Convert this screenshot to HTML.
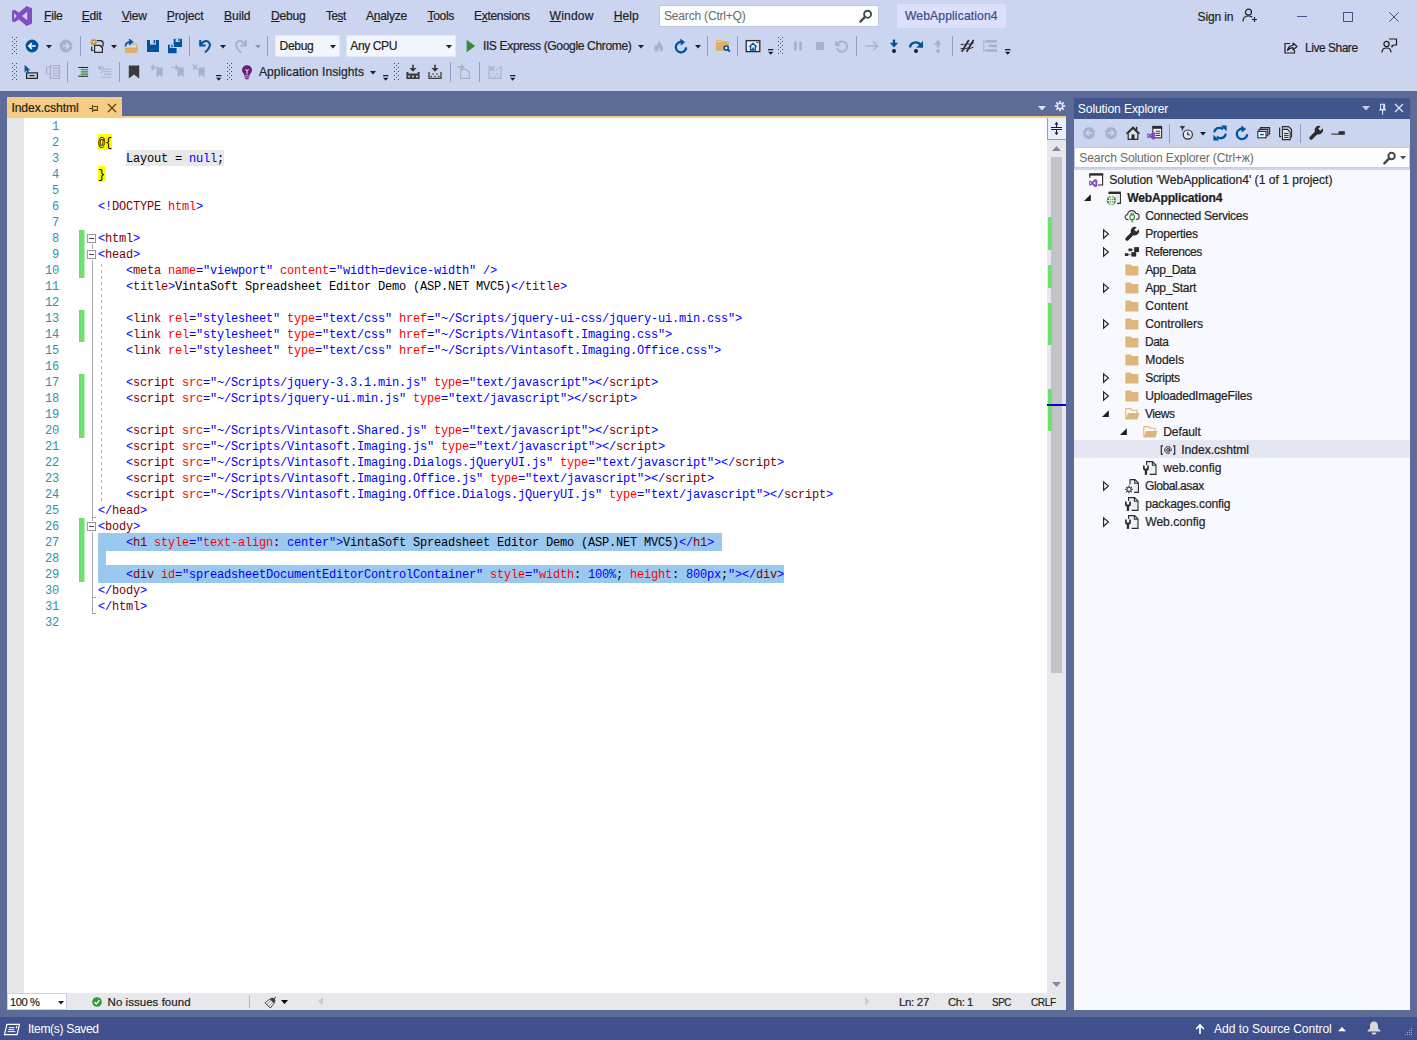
<!DOCTYPE html>
<html>
<head>
<meta charset="utf-8">
<title>WebApplication4 - Microsoft Visual Studio</title>
<style>
*{box-sizing:border-box;margin:0;padding:0}
html,body{width:1417px;height:1040px;overflow:hidden;background:#5d6b99;font-family:"Liberation Sans",sans-serif;font-size:12px;color:#1e1e1e}
#root{position:absolute;left:0;top:0;width:1417px;height:1040px;overflow:hidden}
.t{position:absolute;white-space:nowrap;line-height:16px;height:16px;-webkit-text-stroke:0.2px currentColor}
.t u{text-decoration:underline;text-underline-offset:0.5px;text-decoration-thickness:1px}
svg{position:absolute;overflow:visible}
.ln{position:absolute;left:24px;width:35px;text-align:right;height:16px;line-height:16px;color:#2b91af;font-family:"Liberation Mono",monospace;font-size:12px;letter-spacing:-0.2px}
.cl{position:absolute;left:98px;height:16px;line-height:16px;white-space:pre;font-family:"Liberation Mono",monospace;font-size:12px;letter-spacing:-0.2012px;color:#000}
.b{color:#0000ff}.m{color:#800000}.r{color:#ff0000}
</style>
</head>
<body>
<div id="root">
<!-- backgrounds -->
<div style="position:absolute;left:0px;top:0px;width:1417px;height:91px;background:#ccd5f0;"></div>
<div style="position:absolute;left:659px;top:5px;width:220px;height:22px;background:#fdfdfe;border:1px solid #bcc4de;"></div>
<div style="position:absolute;left:897px;top:4px;width:109px;height:24px;background:#dce0fa;"></div>
<div style="position:absolute;left:80px;top:36px;width:1px;height:20px;background:#8e9bc2;"></div>
<div style="position:absolute;left:189px;top:36px;width:1px;height:20px;background:#8e9bc2;"></div>
<div style="position:absolute;left:267px;top:36px;width:1px;height:20px;background:#8e9bc2;"></div>
<div style="position:absolute;left:275px;top:35px;width:65px;height:22px;background:#f3f5fc;border:1px solid #e2e7f7;"></div>
<div style="position:absolute;left:346px;top:35px;width:110px;height:22px;background:#f3f5fc;border:1px solid #e2e7f7;"></div>
<div style="position:absolute;left:707px;top:36px;width:1px;height:20px;background:#8e9bc2;"></div>
<div style="position:absolute;left:737px;top:36px;width:1px;height:20px;background:#8e9bc2;"></div>
<div style="position:absolute;left:856px;top:36px;width:1px;height:20px;background:#8e9bc2;"></div>
<div style="position:absolute;left:952px;top:36px;width:1px;height:20px;background:#8e9bc2;"></div>
<div style="position:absolute;left:67px;top:62px;width:1px;height:20px;background:#8e9bc2;"></div>
<div style="position:absolute;left:119px;top:62px;width:1px;height:20px;background:#8e9bc2;"></div>
<div style="position:absolute;left:450px;top:62px;width:1px;height:20px;background:#8e9bc2;"></div>
<div style="position:absolute;left:479px;top:62px;width:1px;height:20px;background:#8e9bc2;"></div>
<div style="position:absolute;left:7px;top:97px;width:115px;height:19px;background:#f5cc84;"></div>
<div style="position:absolute;left:7px;top:116px;width:1059px;height:2px;background:#f5cc84;"></div>
<div style="position:absolute;left:7px;top:118px;width:1040px;height:875px;background:#ffffff;"></div>
<div style="position:absolute;left:7px;top:118px;width:17px;height:875px;background:#e6e7e8;"></div>
<div style="position:absolute;left:1047px;top:118px;width:19px;height:875px;background:#e8e8ec;"></div>
<div style="position:absolute;left:7px;top:993px;width:1059px;height:17px;background:#e8e8ec;"></div>
<div style="position:absolute;left:1047px;top:118px;width:19px;height:22px;background:#e9eeff;border-left:1px solid #8e9bc8;border-bottom:1px solid #8e9bc8;"></div>
<div style="position:absolute;left:1051px;top:157px;width:11px;height:516px;background:#c2c3c9;"></div>
<div style="position:absolute;left:1048px;top:217px;width:4px;height:33px;background:#6ce26c;"></div>
<div style="position:absolute;left:1048px;top:265px;width:4px;height:23px;background:#6ce26c;"></div>
<div style="position:absolute;left:1048px;top:303px;width:4px;height:42px;background:#6ce26c;"></div>
<div style="position:absolute;left:1048px;top:389px;width:4px;height:42px;background:#6ce26c;"></div>
<div style="position:absolute;left:1047px;top:404px;width:19px;height:2px;background:#0000cd;"></div>
<div style="position:absolute;left:79px;top:230px;width:5px;height:48px;background:#6ce26c;"></div>
<div style="position:absolute;left:84px;top:230px;width:1px;height:48px;background:#b6f0b6;"></div>
<div style="position:absolute;left:79px;top:310px;width:5px;height:32px;background:#6ce26c;"></div>
<div style="position:absolute;left:84px;top:310px;width:1px;height:32px;background:#b6f0b6;"></div>
<div style="position:absolute;left:79px;top:374px;width:5px;height:64px;background:#6ce26c;"></div>
<div style="position:absolute;left:84px;top:374px;width:1px;height:64px;background:#b6f0b6;"></div>
<div style="position:absolute;left:79px;top:518px;width:5px;height:64px;background:#6ce26c;"></div>
<div style="position:absolute;left:84px;top:518px;width:1px;height:64px;background:#b6f0b6;"></div>
<div style="position:absolute;left:87px;top:234px;width:9px;height:9px;background:#ffffff;border:1px solid #999;"></div>
<div style="position:absolute;left:89px;top:238px;width:5px;height:1px;background:#444;"></div>
<div style="position:absolute;left:87px;top:250px;width:9px;height:9px;background:#ffffff;border:1px solid #999;"></div>
<div style="position:absolute;left:89px;top:254px;width:5px;height:1px;background:#444;"></div>
<div style="position:absolute;left:87px;top:522px;width:9px;height:9px;background:#ffffff;border:1px solid #999;"></div>
<div style="position:absolute;left:89px;top:526px;width:5px;height:1px;background:#444;"></div>
<div style="position:absolute;left:92px;top:244px;width:1px;height:5px;background:#a5a5a5;"></div>
<div style="position:absolute;left:92px;top:260px;width:1px;height:261px;background:#a5a5a5;"></div>
<div style="position:absolute;left:92px;top:532px;width:1px;height:82px;background:#a5a5a5;"></div>
<div style="position:absolute;left:92px;top:517px;width:4px;height:1px;background:#a5a5a5;"></div>
<div style="position:absolute;left:92px;top:597px;width:4px;height:1px;background:#a5a5a5;"></div>
<div style="position:absolute;left:92px;top:613px;width:4px;height:1px;background:#a5a5a5;"></div>
<div style="position:absolute;left:98px;top:134px;width:14px;height:16px;background:#ffff00;"></div>
<div style="position:absolute;left:98px;top:166px;width:7px;height:16px;background:#ffff00;"></div>
<div style="position:absolute;left:126px;top:150px;width:98px;height:16px;background:#e8e8e8;"></div>
<div style="position:absolute;left:98px;top:533px;width:624px;height:18px;background:#9bc8ee;"></div>
<div style="position:absolute;left:98px;top:550px;width:8px;height:16px;background:#9bc8ee;"></div>
<div style="position:absolute;left:98px;top:565px;width:686px;height:18px;background:#9bc8ee;"></div>
<div style="position:absolute;left:101px;top:264px;width:1px;height:238px;background:repeating-linear-gradient(to bottom,#b8b8b8 0,#b8b8b8 3px,transparent 3px,transparent 6px)"></div>
<div style="position:absolute;left:101px;top:536px;width:1px;height:46px;background:repeating-linear-gradient(to bottom,#b8b8b8 0,#b8b8b8 3px,transparent 3px,transparent 6px)"></div>
<div style="position:absolute;left:7px;top:993px;width:60px;height:17px;background:#c9d0ea;"></div>
<div style="position:absolute;left:8px;top:994px;width:58px;height:15px;background:#ffffff;"></div>
<div style="position:absolute;left:249px;top:995px;width:1px;height:13px;background:#b0b8d6;"></div>
<div style="position:absolute;left:1074px;top:98px;width:336px;height:912px;background:#f7f9fe;"></div>
<div style="position:absolute;left:1074px;top:98px;width:336px;height:21px;background:#40568d;"></div>
<div style="position:absolute;left:1074px;top:119px;width:336px;height:51px;background:#ccd5f0;"></div>
<div style="position:absolute;left:1074px;top:147px;width:336px;height:21px;background:#fdfdfe;border:1px solid #bfc6de;border-bottom-color:#c6cbde;"></div>
<div style="position:absolute;left:1169px;top:124px;width:1px;height:19px;background:#8e9bc2;"></div>
<div style="position:absolute;left:1300px;top:124px;width:1px;height:19px;background:#8e9bc2;"></div>
<div style="position:absolute;left:1074px;top:440px;width:336px;height:18px;background:#e4e6f1;"></div>
<div style="position:absolute;left:0px;top:1017px;width:1417px;height:23px;background:#40508d;"></div>
<!-- code -->
<div class="ln" style="top:119px">1</div>
<div class="ln" style="top:135px">2</div>
<div class="cl" style="top:135px"><span class="y">@{</span></div>
<div class="ln" style="top:151px">3</div>
<div class="cl" style="top:151px">    <span class="g">Layout = <span class="b">null</span>;</span></div>
<div class="ln" style="top:167px">4</div>
<div class="cl" style="top:167px"><span class="y">}</span></div>
<div class="ln" style="top:183px">5</div>
<div class="ln" style="top:199px">6</div>
<div class="cl" style="top:199px"><span class="b">&lt;!</span><span class="m">DOCTYPE</span> <span class="r">html</span><span class="b">&gt;</span></div>
<div class="ln" style="top:215px">7</div>
<div class="ln" style="top:231px">8</div>
<div class="cl" style="top:231px"><span class="b">&lt;</span><span class="m">html</span><span class="b">&gt;</span></div>
<div class="ln" style="top:247px">9</div>
<div class="cl" style="top:247px"><span class="b">&lt;</span><span class="m">head</span><span class="b">&gt;</span></div>
<div class="ln" style="top:263px">10</div>
<div class="cl" style="top:263px">    <span class="b">&lt;</span><span class="m">meta</span> <span class="r">name</span><span class="b">=</span><span class="b">&quot;viewport&quot;</span> <span class="r">content</span><span class="b">=</span><span class="b">&quot;width=device-width&quot;</span> <span class="b">/</span><span class="b">&gt;</span></div>
<div class="ln" style="top:279px">11</div>
<div class="cl" style="top:279px">    <span class="b">&lt;</span><span class="m">title</span><span class="b">&gt;</span>VintaSoft Spreadsheet Editor Demo (ASP.NET MVC5)<span class="b">&lt;/</span><span class="m">title</span><span class="b">&gt;</span></div>
<div class="ln" style="top:295px">12</div>
<div class="ln" style="top:311px">13</div>
<div class="cl" style="top:311px">    <span class="b">&lt;</span><span class="m">link</span> <span class="r">rel</span><span class="b">=</span><span class="b">&quot;stylesheet&quot;</span> <span class="r">type</span><span class="b">=</span><span class="b">&quot;text/css&quot;</span> <span class="r">href</span><span class="b">=</span><span class="b">&quot;~/Scripts/jquery-ui-css/jquery-ui.min.css&quot;</span><span class="b">&gt;</span></div>
<div class="ln" style="top:327px">14</div>
<div class="cl" style="top:327px">    <span class="b">&lt;</span><span class="m">link</span> <span class="r">rel</span><span class="b">=</span><span class="b">&quot;stylesheet&quot;</span> <span class="r">type</span><span class="b">=</span><span class="b">&quot;text/css&quot;</span> <span class="r">href</span><span class="b">=</span><span class="b">&quot;~/Scripts/Vintasoft.Imaging.css&quot;</span><span class="b">&gt;</span></div>
<div class="ln" style="top:343px">15</div>
<div class="cl" style="top:343px">    <span class="b">&lt;</span><span class="m">link</span> <span class="r">rel</span><span class="b">=</span><span class="b">&quot;stylesheet&quot;</span> <span class="r">type</span><span class="b">=</span><span class="b">&quot;text/css&quot;</span> <span class="r">href</span><span class="b">=</span><span class="b">&quot;~/Scripts/Vintasoft.Imaging.Office.css&quot;</span><span class="b">&gt;</span></div>
<div class="ln" style="top:359px">16</div>
<div class="ln" style="top:375px">17</div>
<div class="cl" style="top:375px">    <span class="b">&lt;</span><span class="m">script</span> <span class="r">src</span><span class="b">=</span><span class="b">&quot;~/Scripts/jquery-3.3.1.min.js&quot;</span> <span class="r">type</span><span class="b">=</span><span class="b">&quot;text/javascript&quot;</span><span class="b">&gt;</span><span class="b">&lt;/</span><span class="m">script</span><span class="b">&gt;</span></div>
<div class="ln" style="top:391px">18</div>
<div class="cl" style="top:391px">    <span class="b">&lt;</span><span class="m">script</span> <span class="r">src</span><span class="b">=</span><span class="b">&quot;~/Scripts/jquery-ui.min.js&quot;</span> <span class="r">type</span><span class="b">=</span><span class="b">&quot;text/javascript&quot;</span><span class="b">&gt;</span><span class="b">&lt;/</span><span class="m">script</span><span class="b">&gt;</span></div>
<div class="ln" style="top:407px">19</div>
<div class="ln" style="top:423px">20</div>
<div class="cl" style="top:423px">    <span class="b">&lt;</span><span class="m">script</span> <span class="r">src</span><span class="b">=</span><span class="b">&quot;~/Scripts/Vintasoft.Shared.js&quot;</span> <span class="r">type</span><span class="b">=</span><span class="b">&quot;text/javascript&quot;</span><span class="b">&gt;</span><span class="b">&lt;/</span><span class="m">script</span><span class="b">&gt;</span></div>
<div class="ln" style="top:439px">21</div>
<div class="cl" style="top:439px">    <span class="b">&lt;</span><span class="m">script</span> <span class="r">src</span><span class="b">=</span><span class="b">&quot;~/Scripts/Vintasoft.Imaging.js&quot;</span> <span class="r">type</span><span class="b">=</span><span class="b">&quot;text/javascript&quot;</span><span class="b">&gt;</span><span class="b">&lt;/</span><span class="m">script</span><span class="b">&gt;</span></div>
<div class="ln" style="top:455px">22</div>
<div class="cl" style="top:455px">    <span class="b">&lt;</span><span class="m">script</span> <span class="r">src</span><span class="b">=</span><span class="b">&quot;~/Scripts/Vintasoft.Imaging.Dialogs.jQueryUI.js&quot;</span> <span class="r">type</span><span class="b">=</span><span class="b">&quot;text/javascript&quot;</span><span class="b">&gt;</span><span class="b">&lt;/</span><span class="m">script</span><span class="b">&gt;</span></div>
<div class="ln" style="top:471px">23</div>
<div class="cl" style="top:471px">    <span class="b">&lt;</span><span class="m">script</span> <span class="r">src</span><span class="b">=</span><span class="b">&quot;~/Scripts/Vintasoft.Imaging.Office.js&quot;</span> <span class="r">type</span><span class="b">=</span><span class="b">&quot;text/javascript&quot;</span><span class="b">&gt;</span><span class="b">&lt;/</span><span class="m">script</span><span class="b">&gt;</span></div>
<div class="ln" style="top:487px">24</div>
<div class="cl" style="top:487px">    <span class="b">&lt;</span><span class="m">script</span> <span class="r">src</span><span class="b">=</span><span class="b">&quot;~/Scripts/Vintasoft.Imaging.Office.Dialogs.jQueryUI.js&quot;</span> <span class="r">type</span><span class="b">=</span><span class="b">&quot;text/javascript&quot;</span><span class="b">&gt;</span><span class="b">&lt;/</span><span class="m">script</span><span class="b">&gt;</span></div>
<div class="ln" style="top:503px">25</div>
<div class="cl" style="top:503px"><span class="b">&lt;/</span><span class="m">head</span><span class="b">&gt;</span></div>
<div class="ln" style="top:519px">26</div>
<div class="cl" style="top:519px"><span class="b">&lt;</span><span class="m">body</span><span class="b">&gt;</span></div>
<div class="ln" style="top:535px">27</div>
<div class="cl" style="top:535px">    <span class="b">&lt;</span><span class="m">h1</span> <span class="r">style</span><span class="b">=</span><span class="b">"</span><span class="r">text-align</span>:<span class="b"> center</span><span class="b">"</span><span class="b">&gt;</span>VintaSoft Spreadsheet Editor Demo (ASP.NET MVC5)<span class="b">&lt;/</span><span class="m">h1</span><span class="b">&gt;</span></div>
<div class="ln" style="top:551px">28</div>
<div class="ln" style="top:567px">29</div>
<div class="cl" style="top:567px">    <span class="b">&lt;</span><span class="m">div</span> <span class="r">id</span><span class="b">=</span><span class="b">&quot;spreadsheetDocumentEditorControlContainer&quot;</span> <span class="r">style</span><span class="b">=</span><span class="b">"</span><span class="r">width</span>:<span class="b"> 100%</span>; <span class="r">height</span>:<span class="b"> 800px</span>;<span class="b">"</span><span class="b">&gt;</span><span class="b">&lt;/</span><span class="m">div</span><span class="b">&gt;</span></div>
<div class="ln" style="top:583px">30</div>
<div class="cl" style="top:583px"><span class="b">&lt;/</span><span class="m">body</span><span class="b">&gt;</span></div>
<div class="ln" style="top:599px">31</div>
<div class="cl" style="top:599px"><span class="b">&lt;/</span><span class="m">html</span><span class="b">&gt;</span></div>
<div class="ln" style="top:615px">32</div>
<!-- icons -->
<svg style="left:12px;top:6px" width="20" height="20" viewBox="0 0 20 20"><path fill="#854cc7" fill-rule="evenodd" d="M14.6 0 L20 2.3 V17.4 L14.6 20 L6.9 13.4 L2.2 16.2 L0 15 V5 L2.2 3.8 L6.9 6.6 Z M10 10 L15.2 14.3 V5.7 Z M2.2 7.1 V12.9 L4.7 10 Z"/></svg>
<svg style="left:857.5px;top:8.5px" width="14" height="14" viewBox="0 0 14 14"><circle cx="9.6" cy="5.2" r="3.5" fill="none" stroke="#4a4a4a" stroke-width="1.9"/><path d="M7 7.8 L2.4 12.6" stroke="#4a4a4a" stroke-width="2.4" stroke-linecap="round"/></svg>
<svg style="left:1242px;top:7.5px" width="16" height="16" viewBox="0 0 16 16"><circle cx="6.5" cy="4.2" r="3" fill="none" stroke="#1e1e1e" stroke-width="1.2"/><path d="M1 13.5 C1 9.5 3.5 8 6.5 8 C8 8 9.3 8.4 10.2 9.2" fill="none" stroke="#1e1e1e" stroke-width="1.2"/><path d="M12.5 9 V14 M10 11.5 H15" stroke="#1e1e1e" stroke-width="1.2"/></svg>
<svg style="left:1297px;top:11px" width="10" height="11" viewBox="0 0 10 11"><path d="M0 5.5 H10" stroke="#44518a" stroke-width="1"/></svg>
<svg style="left:1343px;top:12px" width="10" height="10" viewBox="0 0 10 10"><rect x="0.5" y="0.5" width="9" height="9" fill="none" stroke="#44518a" stroke-width="1"/></svg>
<svg style="left:1389.2px;top:12px" width="10" height="10" viewBox="0 0 10 10"><path d="M0.3 0.3 L9.7 9.7 M9.7 0.3 L0.3 9.7" stroke="#44518a" stroke-width="1"/></svg>
<svg style="left:1283px;top:39.5px" width="16" height="16" viewBox="0 0 16 16"><path d="M7 3.5 H2 V13 H11.5 V10" fill="none" stroke="#1e1e1e" stroke-width="1.2"/><path d="M4.5 10.5 C5 7 7.5 5.5 10 5.5 V3 L14 6.5 L10 10 V7.6 C8 7.6 6 8.4 4.5 10.5 Z" fill="none" stroke="#1e1e1e" stroke-width="1.1" stroke-linejoin="round"/></svg>
<svg style="left:1381px;top:38px" width="16" height="16" viewBox="0 0 16 16"><circle cx="5.5" cy="6" r="2.6" fill="none" stroke="#1e1e1e" stroke-width="1.2"/><path d="M1 14.5 C1 11.5 3 10 5.5 10 C8 10 10 11.5 10 14.5" fill="none" stroke="#1e1e1e" stroke-width="1.2"/><path d="M8 1 H15.5 V7 H12.5 L11 9 V7" fill="none" stroke="#1e1e1e" stroke-width="1.2" stroke-linejoin="round"/></svg>
<svg style="left:12px;top:37px" width="5" height="18" viewBox="0 0 5 18" shape-rendering="crispEdges" fill="#3f4d7a"><rect x="0" y="0" width="1" height="1"/><rect x="4" y="0" width="1" height="1"/><rect x="2" y="2" width="1" height="1"/><rect x="0" y="4" width="1" height="1"/><rect x="4" y="4" width="1" height="1"/><rect x="2" y="6" width="1" height="1"/><rect x="0" y="8" width="1" height="1"/><rect x="4" y="8" width="1" height="1"/><rect x="2" y="10" width="1" height="1"/><rect x="0" y="12" width="1" height="1"/><rect x="4" y="12" width="1" height="1"/><rect x="2" y="14" width="1" height="1"/><rect x="0" y="16" width="1" height="1"/><rect x="4" y="16" width="1" height="1"/></svg>
<svg style="left:24px;top:38px" width="16" height="16" viewBox="0 0 16 16"><circle cx="8" cy="8" r="6.4" fill="#00539c"/><path d="M11.6 8 H5.4 M7.8 5.2 L5 8 L7.8 10.8" fill="none" stroke="#fff" stroke-width="1.7"/></svg>
<svg style="left:46px;top:44.8px" width="6" height="3.4" viewBox="0 0 6 3.4"><path d="M0 0 H6 L3 3.4 Z" fill="#1e1e1e"/></svg>
<svg style="left:58px;top:38px" width="16" height="16" viewBox="0 0 16 16"><circle cx="8" cy="8" r="6.4" fill="#a9b0cc"/><path d="M4.4 8 H10.6 M8.2 5.2 L11 8 L8.2 10.8" fill="none" stroke="#ccd5f0" stroke-width="1.7"/></svg>
<svg style="left:88.6px;top:38px" width="16" height="16" viewBox="0 0 16 16"><path d="M7.7 2.7 H12.2 L14.1 4.6 V8.4" fill="none" stroke="#2b2b2b" stroke-width="1.2"/><path d="M11.4 2.4 L14.4 5.4 V2.4 Z" fill="#2b2b2b" opacity="0.55"/><path d="M5.6 7.3 H10.6 L13.4 10.1 V14.3 H5.6 Z" fill="#dfe0f2" stroke="#2b2b2b" stroke-width="1.2"/><path d="M10 7 L13.7 10.7 V7 Z" fill="#2b2b2b" opacity="0.6"/><path d="M2.7 8.6 V12.5 H4.4" fill="none" stroke="#2b2b2b" stroke-width="1.2"/><g stroke="#c47f17" stroke-width="1.15"><path d="M4.7 0.7 V7.7 M1.2 4.2 H8.2 M2.2 1.7 L7.2 6.7 M7.2 1.7 L2.2 6.7"/></g><circle cx="4.7" cy="4.2" r="1.15" fill="#e9dcc6"/></svg>
<svg style="left:111px;top:44.8px" width="6" height="3.4" viewBox="0 0 6 3.4"><path d="M0 0 H6 L3 3.4 Z" fill="#1e1e1e"/></svg>
<svg style="left:122.5px;top:38px" width="16" height="16" viewBox="0 0 16 16"><path d="M9.2 6.3 H13.7 V10" fill="#f1e2c4" stroke="#d9ad62" stroke-width="1.1"/><path d="M1.9 9.7 H15.3 L14.1 15 H1.9 Z" fill="#dcb067"/><path d="M2.5 8.4 C2.3 5.2 4.4 3.9 8.4 3.9" fill="none" stroke="#00539c" stroke-width="1.7"/><path d="M6 1.3 L9.3 3.9 L6 6.5" fill="none" stroke="#00539c" stroke-width="1.7"/></svg>
<svg style="left:145px;top:38px" width="16" height="16" viewBox="0 0 16 16"><path d="M2 2 H14 V14 H2 Z" fill="#00539c"/><rect x="5" y="2" width="6" height="4.6" fill="#ccd5f0"/><rect x="8.6" y="2" width="1.6" height="3.4" fill="#00539c"/></svg>
<svg style="left:167.4px;top:38px" width="16" height="16" viewBox="0 0 16 16"><path d="M6.6 0.8 H15 V9 H6.6 Z" fill="#00539c"/><rect x="8.6" y="0.8" width="4.2" height="3.2" fill="#ccd5f0"/><rect x="11.2" y="0.8" width="1.2" height="2.4" fill="#00539c"/><path d="M6.6 9 V6 H5.6 V10 H10.6 V9 Z" fill="#ccd5f0"/><path d="M1 6.8 H5.6 V10 H9.6 V15.2 H1 Z" fill="#00539c"/><rect x="2.8" y="6.8" width="2.8" height="3" fill="#ccd5f0"/><rect x="4.4" y="6.8" width="1.1" height="2.2" fill="#00539c"/></svg>
<svg style="left:197px;top:38px" width="16" height="16" viewBox="0 0 16 16"><path d="M3.2 2 V7.4 H8.6" fill="none" stroke="#00539c" stroke-width="2"/><path d="M3.6 7 C5 3.6 9 2 11.6 4 C14.4 6.2 12.6 10.4 8 14.6" fill="none" stroke="#00539c" stroke-width="2"/></svg>
<svg style="left:220px;top:44.8px" width="6" height="3.4" viewBox="0 0 6 3.4"><path d="M0 0 H6 L3 3.4 Z" fill="#1e1e1e"/></svg>
<svg style="left:232.5px;top:38px" width="16" height="16" viewBox="0 0 16 16"><path d="M12.8 2 V7.4 H7.4" fill="none" stroke="#a9b0cc" stroke-width="2"/><path d="M12.4 7 C11 3.6 7 2 4.4 4 C1.6 6.2 3.4 10.4 8 14.6" fill="none" stroke="#a9b0cc" stroke-width="2"/></svg>
<svg style="left:254.6px;top:44.8px" width="6" height="3.4" viewBox="0 0 6 3.4"><path d="M0 0 H6 L3 3.4 Z" fill="#8f94a8"/></svg>
<svg style="left:329.5px;top:44.8px" width="6" height="3.4" viewBox="0 0 6 3.4"><path d="M0 0 H6 L3 3.4 Z" fill="#1e1e1e"/></svg>
<svg style="left:446px;top:44.8px" width="6" height="3.4" viewBox="0 0 6 3.4"><path d="M0 0 H6 L3 3.4 Z" fill="#1e1e1e"/></svg>
<svg style="left:463px;top:38px" width="16" height="16" viewBox="0 0 16 16"><path d="M3.6 1.8 L12.2 8 L3.6 14.2 Z" fill="#388a34"/></svg>
<svg style="left:638px;top:44.8px" width="6" height="3.4" viewBox="0 0 6 3.4"><path d="M0 0 H6 L3 3.4 Z" fill="#1e1e1e"/></svg>
<svg style="left:650px;top:38px" width="16" height="16" viewBox="0 0 16 16"><path d="M8.8 2 C9.6 5 13.2 7 13.2 10.4 C13.2 12.6 11.4 14 9.2 14 C6.8 14 5.6 12.4 5.6 10.6 C5.6 8 8.4 6.4 8.8 2 Z" fill="#a9b0cc"/><path d="M5.8 5.2 C6.2 7.8 3.8 9 3.8 11.2 C3.8 12.8 5 13.8 6.6 14 C5 12.6 5.2 10.6 6.4 9 C6.9 8 6.5 6.4 5.8 5.2 Z" fill="#a9b0cc"/><path d="M9.2 14 C8 13 8.2 11.4 9.4 10 C9.8 11.2 10.8 11.6 10.6 13 Z" fill="#ccd5f0"/></svg>
<svg style="left:673px;top:38px" width="16" height="16" viewBox="0 0 16 16"><path d="M13.2 9.4 A5.2 5.2 0 1 1 9.6 4.2" fill="none" stroke="#00539c" stroke-width="2.3"/><path d="M7.2 0.6 L12.2 4.2 L7.8 7.6 Z" fill="#00539c"/></svg>
<svg style="left:694.5px;top:44.8px" width="6" height="3.4" viewBox="0 0 6 3.4"><path d="M0 0 H6 L3 3.4 Z" fill="#1e1e1e"/></svg>
<svg style="left:714px;top:38px" width="16" height="16" viewBox="0 0 16 16"><path d="M1.9 2 H7.4 L8.4 3.2 H15 V12.8 H1.9 Z" fill="#dcb067"/><path d="M2.6 3.3 H7.6" stroke="#f1e2c4" stroke-width="0.9"/><circle cx="12.2" cy="10" r="2.1" fill="#dfe8fb" stroke="#00539c" stroke-width="1.5"/><path d="M13.8 11.6 L16 13.6" stroke="#00539c" stroke-width="1.9"/></svg>
<svg style="left:745px;top:38px" width="16" height="16" viewBox="0 0 16 16"><rect x="1.2" y="2.6" width="13.6" height="11" fill="#e6eaf8" stroke="#2b2b2b" stroke-width="1.3"/><path d="M4.4 8.8 L8 5.4 L11.6 8.8 M5.6 8 V12 H10.4 V8" fill="none" stroke="#00539c" stroke-width="1.3"/><rect x="7.2" y="9.6" width="1.6" height="2.4" fill="#00539c"/><path d="M11.4 4.4 H13.4" stroke="#1e1e1e" stroke-width="1"/></svg>
<svg style="left:768.3px;top:49px" width="5.4" height="6" viewBox="0 0 5.4 6"><path d="M0 0 H5.4 V1.3 H0 Z M0 2.8 H5.4 L2.7 5.8 Z" fill="#1e1e1e"/></svg>
<svg style="left:778px;top:37px" width="5" height="18" viewBox="0 0 5 18" shape-rendering="crispEdges" fill="#3f4d7a"><rect x="0" y="0" width="1" height="1"/><rect x="4" y="0" width="1" height="1"/><rect x="2" y="2" width="1" height="1"/><rect x="0" y="4" width="1" height="1"/><rect x="4" y="4" width="1" height="1"/><rect x="2" y="6" width="1" height="1"/><rect x="0" y="8" width="1" height="1"/><rect x="4" y="8" width="1" height="1"/><rect x="2" y="10" width="1" height="1"/><rect x="0" y="12" width="1" height="1"/><rect x="4" y="12" width="1" height="1"/><rect x="2" y="14" width="1" height="1"/><rect x="0" y="16" width="1" height="1"/><rect x="4" y="16" width="1" height="1"/></svg>
<svg style="left:790px;top:38px" width="16" height="16" viewBox="0 0 16 16"><rect x="4" y="3.6" width="2.8" height="8.8" fill="#a9b0cc"/><rect x="9.2" y="3.6" width="2.8" height="8.8" fill="#a9b0cc"/></svg>
<svg style="left:812px;top:38px" width="16" height="16" viewBox="0 0 16 16"><rect x="4" y="4" width="8" height="8" fill="#a9b0cc"/></svg>
<svg style="left:833.5px;top:38px" width="16" height="16" viewBox="0 0 16 16"><path d="M3.4 6.2 A5.1 5.1 0 1 1 3 9.8" fill="none" stroke="#a9b0cc" stroke-width="2"/><path d="M1.2 2.2 V8 H7 Z" fill="#a9b0cc"/></svg>
<svg style="left:863.5px;top:38px" width="16" height="16" viewBox="0 0 16 16"><path d="M1.6 8 H13.4 M9.4 3.8 L13.6 8 L9.4 12.2" fill="none" stroke="#a9b0cc" stroke-width="1.5"/></svg>
<svg style="left:886px;top:38px" width="16" height="16" viewBox="0 0 16 16"><circle cx="8" cy="13" r="2" fill="#1e1e1e"/><path d="M8 1.6 V6" stroke="#00539c" stroke-width="2.4"/><path d="M3.8 4.8 L8 9.4 L12.2 4.8 Z" fill="#00539c"/></svg>
<svg style="left:908px;top:38px" width="16" height="16" viewBox="0 0 16 16"><circle cx="8" cy="13" r="2" fill="#1e1e1e"/><path d="M2 9.4 C2.6 4.2 9.6 2.6 12.6 7" fill="none" stroke="#00539c" stroke-width="2.4"/><path d="M15 3 V9.8 H8.2 Z" fill="#00539c"/></svg>
<svg style="left:929.5px;top:38px" width="16" height="16" viewBox="0 0 16 16"><circle cx="8" cy="13" r="2" fill="#a9b0cc"/><path d="M8 5 V9.6" stroke="#a9b0cc" stroke-width="2.4"/><path d="M3.8 6.4 L8 1.8 L12.2 6.4 Z" fill="#a9b0cc"/></svg>
<svg style="left:959px;top:38px" width="16" height="16" viewBox="0 0 16 16"><g fill="none" stroke="#2b2b2b"><path d="M2.8 13.8 L9.8 2 M7.6 13.8 L14.6 2" stroke-width="1.7"/><path d="M1.6 6.8 C3.4 5 5 8 7 6.4 C9 4.8 10.6 7.4 12.4 5.8 L14.6 5" stroke-width="1"/><path d="M1.4 11 C3.2 9.2 4.8 12.2 6.8 10.6 C8.8 9 10.4 11.6 12.2 10 L14.4 9.2" stroke-width="1"/></g></svg>
<svg style="left:982px;top:38px" width="16" height="16" viewBox="0 0 16 16"><g fill="#a9b0cc"><rect x="4" y="2" width="11" height="2.6"/><rect x="6.4" y="6.6" width="8.6" height="2.6"/><rect x="4" y="11.2" width="11" height="2.6"/></g><path d="M4.6 3.2 H1.8 V12.6 H4.6" fill="none" stroke="#a9b0cc" stroke-width="1.2"/></svg>
<svg style="left:1005px;top:49px" width="5.4" height="6" viewBox="0 0 5.4 6"><path d="M0 0 H5.4 V1.3 H0 Z M0 2.8 H5.4 L2.7 5.8 Z" fill="#1e1e1e"/></svg>
<svg style="left:12px;top:63px" width="5" height="18" viewBox="0 0 5 18" shape-rendering="crispEdges" fill="#3f4d7a"><rect x="0" y="0" width="1" height="1"/><rect x="4" y="0" width="1" height="1"/><rect x="2" y="2" width="1" height="1"/><rect x="0" y="4" width="1" height="1"/><rect x="4" y="4" width="1" height="1"/><rect x="2" y="6" width="1" height="1"/><rect x="0" y="8" width="1" height="1"/><rect x="4" y="8" width="1" height="1"/><rect x="2" y="10" width="1" height="1"/><rect x="0" y="12" width="1" height="1"/><rect x="4" y="12" width="1" height="1"/><rect x="2" y="14" width="1" height="1"/><rect x="0" y="16" width="1" height="1"/><rect x="4" y="16" width="1" height="1"/></svg>
<svg style="left:23.4px;top:64px" width="16" height="16" viewBox="0 0 16 16"><path d="M3.6 8.8 H14.4 V14.4 H3.6 Z" fill="none" stroke="#2b2b2b" stroke-width="1.3"/><path d="M6.4 11.6 H11.6" stroke="#2b2b2b" stroke-width="1.3"/><path d="M1.6 0.8 V8.6 L3.6 6.8 L5 9.6 L6.4 9 L5 6.2 H7.4 Z" fill="#00539c"/></svg>
<svg style="left:45px;top:64px" width="16" height="16" viewBox="0 0 16 16"><g stroke="#a9b0cc" stroke-width="1.1" fill="none"><path d="M5.4 1.6 H14.6 V14.4 H5.4 Z"/><path d="M7.4 4.4 H14 M7.4 6.8 H14 M7.4 9.2 H14 M7.4 11.6 H14"/><path d="M5.4 3.2 H1.6 V9.8 H5.4"/></g></svg>
<svg style="left:75px;top:64px" width="16" height="16" viewBox="0 0 16 16"><g stroke-width="1.1"><path d="M3.3 3.5 H13.1" stroke="#2b2b2b"/><path d="M5.8 5.7 H13.1 M5.8 7.9 H13.1 M5.8 10.1 H13.1" stroke="#2e8b2e"/><path d="M3.3 12.3 H13.1" stroke="#2b2b2b"/></g></svg>
<svg style="left:97px;top:64px" width="16" height="16" viewBox="0 0 16 16"><g stroke="#a9b0cc" stroke-width="1.1" fill="none"><path d="M7 5.2 H14.4 M7 7.8 H14.4 M7 10.4 H14.4 M4.4 13.2 H14.4"/><path d="M2 1.6 V5 H5 M2.4 4.6 C3.6 2 6.6 2.4 6.4 5 C6.2 6.6 5 7.6 3.6 9"/></g></svg>
<svg style="left:126.4px;top:64px" width="16" height="16" viewBox="0 0 16 16"><path d="M2.8 1.6 H13.2 V14.6 L8 10.6 L2.8 14.6 Z" fill="#3b3b3b"/></svg>
<svg style="left:149.6px;top:64px" width="16" height="16" viewBox="0 0 16 16"><path d="M6.6 3.6 H12.6 V13.2 L9.6 10.8 L6.6 13.2 Z" fill="#a9b0cc"/><path d="M7.6 3.4 H1.6 M4 0.8 L1.4 3.4 L4 6" fill="none" stroke="#a9b0cc" stroke-width="1.4"/></svg>
<svg style="left:170.8px;top:64px" width="16" height="16" viewBox="0 0 16 16"><path d="M6.6 3.6 H12.6 V13.2 L9.6 10.8 L6.6 13.2 Z" fill="#a9b0cc"/><path d="M0.6 3.4 H6.8 M4.4 0.8 L7 3.4 L4.4 6" fill="none" stroke="#a9b0cc" stroke-width="1.4"/></svg>
<svg style="left:192px;top:64px" width="16" height="16" viewBox="0 0 16 16"><path d="M6.6 3.6 H12.6 V13.2 L9.6 10.8 L6.6 13.2 Z" fill="#a9b0cc"/><path d="M0.8 0.8 L5.6 5.6 M5.6 0.8 L0.8 5.6" fill="none" stroke="#a9b0cc" stroke-width="1.5"/></svg>
<svg style="left:216.3px;top:75px" width="5.4" height="6" viewBox="0 0 5.4 6"><path d="M0 0 H5.4 V1.3 H0 Z M0 2.8 H5.4 L2.7 5.8 Z" fill="#1e1e1e"/></svg>
<svg style="left:227px;top:63px" width="5" height="18" viewBox="0 0 5 18" shape-rendering="crispEdges" fill="#3f4d7a"><rect x="0" y="0" width="1" height="1"/><rect x="4" y="0" width="1" height="1"/><rect x="2" y="2" width="1" height="1"/><rect x="0" y="4" width="1" height="1"/><rect x="4" y="4" width="1" height="1"/><rect x="2" y="6" width="1" height="1"/><rect x="0" y="8" width="1" height="1"/><rect x="4" y="8" width="1" height="1"/><rect x="2" y="10" width="1" height="1"/><rect x="0" y="12" width="1" height="1"/><rect x="4" y="12" width="1" height="1"/><rect x="2" y="14" width="1" height="1"/><rect x="0" y="16" width="1" height="1"/><rect x="4" y="16" width="1" height="1"/></svg>
<svg style="left:238.6px;top:64px" width="16" height="16" viewBox="0 0 16 16"><path d="M8 1.2 C11 1.2 13 3.4 13 6 C13 8 11.8 9 11 10.2 V11.4 H5 V10.2 C4.2 9 3 8 3 6 C3 3.4 5 1.2 8 1.2 Z" fill="#68217a"/><path d="M5.6 12.8 H10.4 M6.4 14.6 H9.6" stroke="#68217a" stroke-width="1.2"/><path d="M6.4 5 L8 7.4 L9.6 5 M8 7.4 V10.6" fill="none" stroke="#eadcf0" stroke-width="1"/></svg>
<svg style="left:370px;top:70.8px" width="6" height="3.4" viewBox="0 0 6 3.4"><path d="M0 0 H6 L3 3.4 Z" fill="#1e1e1e"/></svg>
<svg style="left:383.3px;top:75px" width="5.4" height="6" viewBox="0 0 5.4 6"><path d="M0 0 H5.4 V1.3 H0 Z M0 2.8 H5.4 L2.7 5.8 Z" fill="#1e1e1e"/></svg>
<svg style="left:394px;top:63px" width="5" height="18" viewBox="0 0 5 18" shape-rendering="crispEdges" fill="#3f4d7a"><rect x="0" y="0" width="1" height="1"/><rect x="4" y="0" width="1" height="1"/><rect x="2" y="2" width="1" height="1"/><rect x="0" y="4" width="1" height="1"/><rect x="4" y="4" width="1" height="1"/><rect x="2" y="6" width="1" height="1"/><rect x="0" y="8" width="1" height="1"/><rect x="4" y="8" width="1" height="1"/><rect x="2" y="10" width="1" height="1"/><rect x="0" y="12" width="1" height="1"/><rect x="4" y="12" width="1" height="1"/><rect x="2" y="14" width="1" height="1"/><rect x="0" y="16" width="1" height="1"/><rect x="4" y="16" width="1" height="1"/></svg>
<svg style="left:405px;top:64px" width="16" height="16" viewBox="0 0 16 16"><path d="M8 0.8 V6.4" stroke="#3b3b3b" stroke-width="1.6"/><path d="M4.4 4 L8 7.8 L11.6 4 Z" fill="#3b3b3b"/><path d="M1.4 8 H3.4 V9.6 H12.6 V8 H14.6 V15 H1.4 Z" fill="#3b3b3b"/><g fill="#ccd5f0"><rect x="3.2" y="11.6" width="1.8" height="1.8"/><rect x="7.1" y="11.6" width="1.8" height="1.8"/><rect x="11" y="11.6" width="1.8" height="1.8"/></g></svg>
<svg style="left:427px;top:64px" width="16" height="16" viewBox="0 0 16 16"><path d="M8 0.8 V6.4" stroke="#3b3b3b" stroke-width="1.6"/><path d="M4.4 4 L8 7.8 L11.6 4 Z" fill="#3b3b3b"/><path d="M2 8 V14.4 H14 V8" fill="none" stroke="#3b3b3b" stroke-width="1.3"/><g fill="#3b3b3b"><rect x="5.4" y="9.4" width="1.4" height="1.4"/><rect x="9.2" y="9.4" width="1.4" height="1.4"/><rect x="3.6" y="11.8" width="1.4" height="1.4"/><rect x="7.3" y="11.8" width="1.4" height="1.4"/><rect x="11" y="11.8" width="1.4" height="1.4"/></g></svg>
<svg style="left:456px;top:64px" width="16" height="16" viewBox="0 0 16 16"><path d="M4.6 5.4 H10.4 L13.4 8.2 V14.4 H4.6 Z" fill="none" stroke="#a9b0cc" stroke-width="1.2"/><path d="M1.2 3 H7.4 M5.2 0.8 L7.6 3 L5.2 5.2" fill="none" stroke="#a9b0cc" stroke-width="1.3"/></svg>
<svg style="left:486.7px;top:64px" width="16" height="16" viewBox="0 0 16 16"><path d="M2 2 V14.4 H14 V2" fill="none" stroke="#a9b0cc" stroke-width="1.1"/><g fill="#a9b0cc"><rect x="9" y="5" width="1.4" height="1.4"/><rect x="11.6" y="3" width="1.4" height="1.4"/><rect x="5.4" y="9" width="1.4" height="1.4"/><rect x="9.2" y="9" width="1.4" height="1.4"/><rect x="3.6" y="11.6" width="1.4" height="1.4"/><rect x="7.3" y="11.6" width="1.4" height="1.4"/><rect x="11" y="11.6" width="1.4" height="1.4"/></g><path d="M3 2.6 L7.4 7 M7.4 2.6 L3 7" stroke="#a9b0cc" stroke-width="1.4"/></svg>
<svg style="left:510.3px;top:75px" width="5.4" height="6" viewBox="0 0 5.4 6"><path d="M0 0 H5.4 V1.3 H0 Z M0 2.8 H5.4 L2.7 5.8 Z" fill="#1e1e1e"/></svg>
<svg style="left:87.5px;top:102.5px" width="11" height="11" viewBox="0 0 11 11"><path d="M1 5.5 H4.5 M4.5 2 V9 M4.5 3.5 H9.5 V7.5 H4.5 M4.5 7 H9.5" fill="none" stroke="#5c4412" stroke-width="1.1"/></svg>
<svg style="left:107px;top:102.5px" width="10" height="10" viewBox="0 0 10 10"><path d="M1 1 L9 9 M9 1 L1 9" stroke="#5c4412" stroke-width="1.3"/></svg>
<svg style="left:1038px;top:105.5px" width="8" height="5" viewBox="0 0 8 5"><path d="M0 0 H8 L4 4.5 Z" fill="#dfe3f5"/></svg>
<svg style="left:1055px;top:101px" width="10" height="10" viewBox="0 0 10 10"><rect x="4.1" y="-0.2" width="1.8" height="10.4" fill="#dfe3f5" transform="rotate(0 5 5)"/><rect x="4.1" y="-0.2" width="1.8" height="10.4" fill="#dfe3f5" transform="rotate(45 5 5)"/><rect x="4.1" y="-0.2" width="1.8" height="10.4" fill="#dfe3f5" transform="rotate(90 5 5)"/><rect x="4.1" y="-0.2" width="1.8" height="10.4" fill="#dfe3f5" transform="rotate(135 5 5)"/><circle cx="5" cy="5" r="3.5" fill="#dfe3f5"/><circle cx="5" cy="5" r="1.9" fill="#5d6b99"/></svg>
<svg style="left:1050px;top:121px" width="13" height="15" viewBox="0 0 13 15"><path d="M1 6.5 H12 M1 8.5 H12" stroke="#1e1e1e" stroke-width="1.1"/><path d="M6.5 1.6 V6 M6.5 9 V13.4" stroke="#1e1e1e" stroke-width="1.1"/><path d="M4.4 3.6 L6.5 1 L8.6 3.6 Z M4.4 11.4 L6.5 14 L8.6 11.4 Z" fill="#1e1e1e"/></svg>
<svg style="left:1052px;top:146px" width="9" height="5" viewBox="0 0 9 5"><path d="M0 5 L4.5 0 L9 5 Z" fill="#868999"/></svg>
<svg style="left:1052px;top:982px" width="9" height="5" viewBox="0 0 9 5"><path d="M0 0 L4.5 5 L9 0 Z" fill="#868999"/></svg>
<svg style="left:57.6px;top:1000.5px" width="6" height="3.4" viewBox="0 0 6 3.4"><path d="M0 0 H6 L3 3.4 Z" fill="#1e1e1e"/></svg>
<svg style="left:90.8px;top:996.1px" width="12" height="12" viewBox="0 0 12 12"><circle cx="6" cy="6" r="4.8" fill="#2e9b34"/><path d="M3.6 6.2 L5.3 7.9 L8.5 4.3" fill="none" stroke="#fff" stroke-width="1.4"/></svg>
<svg style="left:264.3px;top:995.5px" width="13" height="12" viewBox="0 0 13 12"><path d="M9.4 3.8 L11.8 0.8" stroke="#1e1e1e" stroke-width="1"/><g transform="translate(8.2 4.9) rotate(45)"><path d="M-3 0 A3 3 0 0 1 3 0 Z" fill="#3b3b3b"/><path d="M-3 0.4 L-3.7 6.4 H3.7 L3 0.4 Z" fill="#fff" stroke="#333" stroke-width="0.9"/><path d="M-1.2 0.6 V6.2 M1.2 0.6 V6.2" stroke="#555" stroke-width="0.8"/></g></svg>
<svg style="left:281px;top:999.7px" width="7" height="4" viewBox="0 0 7 4"><path d="M0 0 H7 L3.5 4 Z" fill="#000"/></svg>
<svg style="left:318px;top:997.4px" width="5" height="8.6" viewBox="0 0 5 8.6"><path d="M5 0 V8.6 L0 4.3 Z" fill="#c9cbd9"/></svg>
<svg style="left:865px;top:997.4px" width="5" height="8.6" viewBox="0 0 5 8.6"><path d="M0 0 V8.6 L5 4.3 Z" fill="#c9cbd9"/></svg>
<svg style="left:1362px;top:105.5px" width="8" height="5" viewBox="0 0 8 5"><path d="M0 0 H8 L4 4.5 Z" fill="#c5cce6"/></svg>
<svg style="left:1377px;top:102.5px" width="11" height="12" viewBox="0 0 11 12"><path d="M3.6 1.2 H7.6 V6.6 H3.6 Z M2.2 6.9 H9 M5.6 7 V11.6" fill="none" stroke="#dfe3f5" stroke-width="1.1"/><path d="M6.9 1.2 V6.6" stroke="#dfe3f5" stroke-width="1.6"/></svg>
<svg style="left:1394px;top:103px" width="10" height="10" viewBox="0 0 10 10"><path d="M1 1 L9 9 M9 1 L1 9" stroke="#dfe3f5" stroke-width="1.3"/></svg>
<svg style="left:1080.8px;top:125px" width="16" height="16" viewBox="0 0 16 16"><circle cx="8" cy="8" r="6" fill="#a9b0cc"/><path d="M11.4 8 H5.6 M8 5.4 L5.2 8 L8 10.6" fill="none" stroke="#ccd5f0" stroke-width="1.6"/></svg>
<svg style="left:1103px;top:125px" width="16" height="16" viewBox="0 0 16 16"><circle cx="8" cy="8" r="6" fill="#a9b0cc"/><path d="M4.6 8 H10.4 M8 5.4 L10.8 8 L8 10.6" fill="none" stroke="#ccd5f0" stroke-width="1.6"/></svg>
<svg style="left:1125.2px;top:125px" width="16" height="16" viewBox="0 0 16 16"><path d="M3.2 8.2 V14.3 H12.8 V8.2 L8 3.4 Z" fill="#dfe0f2" stroke="#2b2b2b" stroke-width="1.2"/><path d="M1.4 8.8 L8 2.2 L14.6 8.8" fill="none" stroke="#2b2b2b" stroke-width="1.4"/><rect x="6.5" y="9.4" width="3" height="4.9" fill="#2b2b2b"/><path d="M11.6 1.8 V5" stroke="#2b2b2b" stroke-width="1.5"/></svg>
<svg style="left:1147px;top:125px" width="16" height="16" viewBox="0 0 16 16"><rect x="5.8" y="1.4" width="8.8" height="11.4" fill="#f7f9fe" stroke="#2b2b2b" stroke-width="1.1"/><rect x="5.8" y="1.4" width="8.8" height="2.4" fill="#2b2b2b"/><path d="M8.6 6.2 H13.2 M8.6 8.3 H13.2 M8.6 10.4 H13.2" stroke="#2b2b2b" stroke-width="1"/><path fill="#854cc7" fill-rule="evenodd" transform="translate(0.2 6.8) scale(0.4)" d="M14.6 0 L20 2.3 V17.4 L14.6 20 L6.9 13.4 L2.2 16.2 L0 15 V5 L2.2 3.8 L6.9 6.6 Z M10 10 L15.2 14.3 V5.7 Z M2.2 7.1 V12.9 L4.7 10 Z"/></svg>
<svg style="left:1179px;top:125px" width="16" height="16" viewBox="0 0 16 16"><circle cx="8.8" cy="9.6" r="4.6" fill="#e4e6f6" stroke="#2b2b2b" stroke-width="1.2"/><path d="M8.8 7 V9.8 H11" fill="none" stroke="#2b2b2b" stroke-width="1.1"/><path d="M1.2 1.4 H5.6 L3.4 4 Z M3.4 3 V6" fill="#2b2b2b" stroke="#2b2b2b" stroke-width="0.8"/></svg>
<svg style="left:1200px;top:131.8px" width="6" height="3.4" viewBox="0 0 6 3.4"><path d="M0 0 H6 L3 3.4 Z" fill="#1e1e1e"/></svg>
<svg style="left:1212px;top:125px" width="16" height="16" viewBox="0 0 16 16"><path d="M2.2 7.4 C2.6 3.6 6.6 1.8 10 3.4 L11.2 4.2" fill="none" stroke="#00539c" stroke-width="2.3"/><path d="M8.8 0.4 H14.6 V6.2 Z" fill="#00539c"/><path d="M13.8 8.6 C13.4 12.4 9.4 14.2 6 12.6 L4.8 11.8" fill="none" stroke="#00539c" stroke-width="2.3"/><path d="M7.2 15.6 H1.4 V9.8 Z" fill="#00539c"/></svg>
<svg style="left:1234px;top:125px" width="16" height="16" viewBox="0 0 16 16"><path d="M13.2 9.2 A5.2 5.2 0 1 1 9.6 4" fill="none" stroke="#00539c" stroke-width="2.3"/><path d="M7.2 0.4 L12.2 4 L7.8 7.4 Z" fill="#00539c"/></svg>
<svg style="left:1256.4px;top:125px" width="16" height="16" viewBox="0 0 16 16"><path d="M4.6 4.4 V2.6 H13.6 V9 H11.8" fill="none" stroke="#2b2b2b" stroke-width="1.1"/><path d="M3 6.2 V4.4 H11.8 V10.8 H10" fill="none" stroke="#2b2b2b" stroke-width="1.1"/><rect x="1.8" y="6.4" width="8.2" height="6.4" fill="#f7f9fe" stroke="#2b2b2b" stroke-width="1.1"/><path d="M4 9.6 H7.8" stroke="#00539c" stroke-width="1.4"/></svg>
<svg style="left:1278px;top:125px" width="16" height="16" viewBox="0 0 16 16"><path d="M4.4 3.6 V1.6 H10.6 L13.6 4.6 V12 H12.4" fill="none" stroke="#2b2b2b" stroke-width="1.1"/><path d="M1.6 2.4 V11.6 H3.4" fill="none" stroke="#2b2b2b" stroke-width="1.1"/><path d="M4.4 4.4 H9.4 L12.2 7.2 V14.6 H4.4 Z" fill="#e4e6f6" stroke="#2b2b2b" stroke-width="1.1"/><path d="M6 8.4 H10.6 M6 10.4 H10.6 M6 12.4 H10.6" stroke="#2b2b2b" stroke-width="1"/></svg>
<svg style="left:1308.2px;top:125px" width="16" height="16" viewBox="0 0 16 16"><path transform="translate(10.8 5.2) rotate(-45) scale(1.07)" d="M-10.2 -1.7 H-3.6 A4.1 4.1 0 0 1 3.85 -1.4 H0.6 V1.4 H3.85 A4.1 4.1 0 0 1 -3.6 1.7 H-10.2 A1.7 1.7 0 0 1 -10.2 -1.7 Z" fill="#2b2b2b"/></svg>
<svg style="left:1330px;top:125px" width="16" height="16" viewBox="0 0 16 16"><path d="M1.4 9.1 H9" stroke="#2b2b2b" stroke-width="1.1"/><rect x="8.6" y="6.2" width="6.2" height="3.6" fill="#2b2b2b"/></svg>
<svg style="left:1381.7px;top:150.5px" width="14" height="14" viewBox="0 0 14 14"><circle cx="9.6" cy="5" r="3.2" fill="none" stroke="#4a4a4a" stroke-width="2"/><path d="M7.2 7.4 L2.4 12.4" stroke="#4a4a4a" stroke-width="2.5" stroke-linecap="round"/></svg>
<svg style="left:1400px;top:155.8px" width="6" height="3.4" viewBox="0 0 6 3.4"><path d="M0 0 H6 L3 3.4 Z" fill="#4a4a4a"/></svg>
<svg style="left:1087.8px;top:171.8px" width="16" height="16" viewBox="0 0 16 16"><path d="M1.8 2 H14.6 V13 H10" fill="none" stroke="#2b2b2b" stroke-width="1.1"/><rect x="1.2" y="1.4" width="14" height="2.2" fill="#2b2b2b"/><path d="M1.8 3 V6" stroke="#2b2b2b" stroke-width="1.1"/><path fill="#854cc7" fill-rule="evenodd" transform="translate(1.1 7) scale(0.41)" d="M14.6 0 L20 2.3 V17.4 L14.6 20 L6.9 13.4 L2.2 16.2 L0 15 V5 L2.2 3.8 L6.9 6.6 Z M10 10 L15.2 14.3 V5.7 Z M2.2 7.1 V12.9 L4.7 10 Z"/></svg>
<svg style="left:1083.9px;top:193.5px" width="7" height="7" viewBox="0 0 7 7"><path d="M6.8 0.2 V7 H0 Z" fill="#1e1e1e"/></svg>
<svg style="left:1106px;top:189.8px" width="16" height="16" viewBox="0 0 16 16"><path d="M3 2.4 H14.4 V13.4 H11" fill="none" stroke="#2b2b2b" stroke-width="1.1"/><rect x="2.4" y="1.8" width="12.6" height="2.2" fill="#2b2b2b"/><rect x="9" y="5" width="4.6" height="6" fill="#e4e6f6"/><circle cx="5.4" cy="10.6" r="4.6" fill="#2e8b2e"/><path d="M5.4 6.4 V14.8 M1.2 10.6 H9.6 M2.6 8.2 H8.2 M2.6 13 H8.2" stroke="#f7f9fe" stroke-width="0.9"/><ellipse cx="5.4" cy="10.6" rx="2" ry="4.2" fill="none" stroke="#f7f9fe" stroke-width="0.9"/></svg>
<svg style="left:1124px;top:207.8px" width="16" height="16" viewBox="0 0 16 16"><path d="M4.4 11.6 C1.8 11.6 0.8 9.8 1.2 8.4 C1.6 7 2.8 6.6 3.6 6.6 C3.8 4.2 5.6 2.6 7.8 2.6 C9.8 2.6 11.2 3.8 11.8 5.4 C13.8 5.4 15.2 6.8 15.2 8.6 C15.2 10.4 13.8 11.6 12.2 11.6" fill="none" stroke="#3b3b3b" stroke-width="1.1"/><rect x="6" y="7" width="4.4" height="4.6" rx="1.4" fill="#f7f9fe" stroke="#2e8b2e" stroke-width="1.2"/><path d="M7.2 4.8 V7 M9.2 4.8 V7 M8.2 11.6 V14.6" stroke="#2e8b2e" stroke-width="1.2"/></svg>
<svg style="left:1103.1px;top:228.5px" width="6" height="10" viewBox="0 0 6 10"><path d="M0.6 0.8 L5.4 5 L0.6 9.2 Z" fill="none" stroke="#1e1e1e" stroke-width="1.1"/></svg>
<svg style="left:1124px;top:225.8px" width="16" height="16" viewBox="0 0 16 16"><path transform="translate(10.8 5.2) rotate(-45) scale(1.07)" d="M-10.2 -1.7 H-3.6 A4.1 4.1 0 0 1 3.85 -1.4 H0.6 V1.4 H3.85 A4.1 4.1 0 0 1 -3.6 1.7 H-10.2 A1.7 1.7 0 0 1 -10.2 -1.7 Z" fill="#2b2b2b"/></svg>
<svg style="left:1103.1px;top:246.5px" width="6" height="10" viewBox="0 0 6 10"><path d="M0.6 0.8 L5.4 5 L0.6 9.2 Z" fill="none" stroke="#1e1e1e" stroke-width="1.1"/></svg>
<svg style="left:1124px;top:243.8px" width="16" height="16" viewBox="0 0 16 16"><rect x="10.2" y="3.1" width="4.8" height="5" fill="#2b2b2b"/><rect x="4.5" y="4.5" width="3.4" height="2.7" fill="#2b2b2b"/><rect x="0.9" y="9.2" width="3.4" height="2.8" fill="#2b2b2b"/><rect x="7.4" y="8.1" width="4.8" height="4.5" fill="#2b2b2b"/><path d="M8.2 5.8 H10.2 M4.6 10.6 H7.4" stroke="#2b2b2b" stroke-width="1" stroke-dasharray="1 0.8"/></svg>
<svg style="left:1124px;top:261.8px" width="16" height="16" viewBox="0 0 16 16"><path d="M1.4 2.4 H6.6 L8 4 H14.4 V13.6 H1.4 Z" fill="#dcb67a"/></svg>
<svg style="left:1103.1px;top:282.5px" width="6" height="10" viewBox="0 0 6 10"><path d="M0.6 0.8 L5.4 5 L0.6 9.2 Z" fill="none" stroke="#1e1e1e" stroke-width="1.1"/></svg>
<svg style="left:1124px;top:279.8px" width="16" height="16" viewBox="0 0 16 16"><path d="M1.4 2.4 H6.6 L8 4 H14.4 V13.6 H1.4 Z" fill="#dcb67a"/></svg>
<svg style="left:1124px;top:297.8px" width="16" height="16" viewBox="0 0 16 16"><path d="M1.4 2.4 H6.6 L8 4 H14.4 V13.6 H1.4 Z" fill="#dcb67a"/></svg>
<svg style="left:1103.1px;top:318.5px" width="6" height="10" viewBox="0 0 6 10"><path d="M0.6 0.8 L5.4 5 L0.6 9.2 Z" fill="none" stroke="#1e1e1e" stroke-width="1.1"/></svg>
<svg style="left:1124px;top:315.8px" width="16" height="16" viewBox="0 0 16 16"><path d="M1.4 2.4 H6.6 L8 4 H14.4 V13.6 H1.4 Z" fill="#dcb67a"/></svg>
<svg style="left:1124px;top:333.8px" width="16" height="16" viewBox="0 0 16 16"><path d="M1.4 2.4 H6.6 L8 4 H14.4 V13.6 H1.4 Z" fill="#dcb67a"/></svg>
<svg style="left:1124px;top:351.8px" width="16" height="16" viewBox="0 0 16 16"><path d="M1.4 2.4 H6.6 L8 4 H14.4 V13.6 H1.4 Z" fill="#dcb67a"/></svg>
<svg style="left:1103.1px;top:372.5px" width="6" height="10" viewBox="0 0 6 10"><path d="M0.6 0.8 L5.4 5 L0.6 9.2 Z" fill="none" stroke="#1e1e1e" stroke-width="1.1"/></svg>
<svg style="left:1124px;top:369.8px" width="16" height="16" viewBox="0 0 16 16"><path d="M1.4 2.4 H6.6 L8 4 H14.4 V13.6 H1.4 Z" fill="#dcb67a"/></svg>
<svg style="left:1103.1px;top:390.5px" width="6" height="10" viewBox="0 0 6 10"><path d="M0.6 0.8 L5.4 5 L0.6 9.2 Z" fill="none" stroke="#1e1e1e" stroke-width="1.1"/></svg>
<svg style="left:1124px;top:387.8px" width="16" height="16" viewBox="0 0 16 16"><path d="M1.4 2.4 H6.6 L8 4 H14.4 V13.6 H1.4 Z" fill="#dcb67a"/></svg>
<svg style="left:1101.9px;top:409.5px" width="7" height="7" viewBox="0 0 7 7"><path d="M6.8 0.2 V7 H0 Z" fill="#1e1e1e"/></svg>
<svg style="left:1124px;top:405.8px" width="16" height="16" viewBox="0 0 16 16"><path d="M1.8 13 V2.6 H6.6 L8 4.2 H13 V7" fill="#fdfaf3" stroke="#dcb67a" stroke-width="1.1"/><path d="M4 7 H15.4 L13.4 13.6 H1.6 Z" fill="#dcb67a"/></svg>
<svg style="left:1119.9px;top:427.5px" width="7" height="7" viewBox="0 0 7 7"><path d="M6.8 0.2 V7 H0 Z" fill="#1e1e1e"/></svg>
<svg style="left:1142px;top:423.8px" width="16" height="16" viewBox="0 0 16 16"><path d="M1.8 13 V2.6 H6.6 L8 4.2 H13 V7" fill="#fdfaf3" stroke="#dcb67a" stroke-width="1.1"/><path d="M4 7 H15.4 L13.4 13.6 H1.6 Z" fill="#dcb67a"/></svg>
<svg style="left:1160px;top:441.8px" width="16" height="16" viewBox="0 0 16 16"><path d="M3 3.9 H1.3 V12.1 H3 M13 3.9 H14.7 V12.1 H13" fill="none" stroke="#2b2b2b" stroke-width="1.2"/><circle cx="8" cy="8" r="1.4" fill="none" stroke="#2b2b2b" stroke-width="1"/><path d="M9.5 6.6 V8.8 C9.5 9.6 11.2 9.6 11.2 7.8 C11.2 5.8 9.7 4.7 8 4.7 C6.1 4.7 4.7 6.2 4.7 8 C4.7 9.8 6.1 11.3 8 11.3 C8.8 11.3 9.4 11.1 10 10.8" fill="none" stroke="#2b2b2b" stroke-width="1"/></svg>
<svg style="left:1142px;top:459.8px" width="16" height="16" viewBox="0 0 16 16"><path d="M4.6 1.6 H10.6 L14 5 V14.4 H4.6 Z" fill="#eceefa" stroke="#2b2b2b" stroke-width="1.1"/><path d="M10.4 1.8 V5.2 H13.8" fill="none" stroke="#2b2b2b" stroke-width="1.1"/><rect x="0.2" y="5" width="7.4" height="10.6" fill="#f7f9fe"/><path d="M3.95 10.4 V14.9" stroke="#2b2b2b" stroke-width="2.3"/><path d="M1 5.5 V8.3 C1 10.1 2.4 11.1 3.95 11.1 C5.5 11.1 6.9 10.1 6.9 8.3 V5.5 H5.2 V8.4 H2.7 V5.5 Z" fill="#2b2b2b"/></svg>
<svg style="left:1103.1px;top:480.5px" width="6" height="10" viewBox="0 0 6 10"><path d="M0.6 0.8 L5.4 5 L0.6 9.2 Z" fill="none" stroke="#1e1e1e" stroke-width="1.1"/></svg>
<svg style="left:1124px;top:477.8px" width="16" height="16" viewBox="0 0 16 16"><path d="M6 1.6 H11 L14.4 5 V14.4 H10" fill="#eceefa" stroke="#2b2b2b" stroke-width="1.1"/><path d="M6 1.6 V6.6" stroke="#2b2b2b" stroke-width="1.1"/><path d="M10.8 1.8 V5.2 H14.2" fill="none" stroke="#2b2b2b" stroke-width="1.1"/><circle cx="5" cy="11.4" r="4.4" fill="#f7f9fe"/><rect x="4.3" y="7.5" width="1.4" height="7.8" fill="#555" transform="rotate(0 5 11.4)"/><rect x="4.3" y="7.5" width="1.4" height="7.8" fill="#555" transform="rotate(45 5 11.4)"/><rect x="4.3" y="7.5" width="1.4" height="7.8" fill="#555" transform="rotate(90 5 11.4)"/><rect x="4.3" y="7.5" width="1.4" height="7.8" fill="#555" transform="rotate(135 5 11.4)"/><circle cx="5" cy="11.4" r="2.5" fill="#555"/><circle cx="5" cy="11.4" r="1.4" fill="#f7f9fe"/></svg>
<svg style="left:1124px;top:495.8px" width="16" height="16" viewBox="0 0 16 16"><path d="M4.6 1.6 H10.6 L14 5 V14.4 H4.6 Z" fill="#eceefa" stroke="#2b2b2b" stroke-width="1.1"/><path d="M10.4 1.8 V5.2 H13.8" fill="none" stroke="#2b2b2b" stroke-width="1.1"/><rect x="0.2" y="5" width="7.4" height="10.6" fill="#f7f9fe"/><path d="M3.95 10.4 V14.9" stroke="#2b2b2b" stroke-width="2.3"/><path d="M1 5.5 V8.3 C1 10.1 2.4 11.1 3.95 11.1 C5.5 11.1 6.9 10.1 6.9 8.3 V5.5 H5.2 V8.4 H2.7 V5.5 Z" fill="#2b2b2b"/></svg>
<svg style="left:1103.1px;top:516.5px" width="6" height="10" viewBox="0 0 6 10"><path d="M0.6 0.8 L5.4 5 L0.6 9.2 Z" fill="none" stroke="#1e1e1e" stroke-width="1.1"/></svg>
<svg style="left:1124px;top:513.8px" width="16" height="16" viewBox="0 0 16 16"><path d="M4.6 1.6 H10.6 L14 5 V14.4 H4.6 Z" fill="#eceefa" stroke="#2b2b2b" stroke-width="1.1"/><path d="M10.4 1.8 V5.2 H13.8" fill="none" stroke="#2b2b2b" stroke-width="1.1"/><rect x="0.2" y="5" width="7.4" height="10.6" fill="#f7f9fe"/><path d="M3.95 10.4 V14.9" stroke="#2b2b2b" stroke-width="2.3"/><path d="M1 5.5 V8.3 C1 10.1 2.4 11.1 3.95 11.1 C5.5 11.1 6.9 10.1 6.9 8.3 V5.5 H5.2 V8.4 H2.7 V5.5 Z" fill="#2b2b2b"/></svg>
<svg style="left:4px;top:1021.9px" width="16" height="15" viewBox="0 0 16 15"><path d="M2.9 2.4 H15.5 L13.1 12.6 H0.5 Z" fill="none" stroke="#fff" stroke-width="1.2"/><path d="M4.8 5.6 H10.6 M4.3 7.6 H10.1 M3.8 9.6 H11.4" fill="none" stroke="#fff" stroke-width="1"/><path d="M11.8 5.8 L13.6 4.4 M12.6 4.2 V6.4" stroke="#fff" stroke-width="0.9"/></svg>
<svg style="left:1194.5px;top:1022.5px" width="10" height="12" viewBox="0 0 10 12"><path d="M5 11 V2.4 M1.2 6 L5 2 L8.8 6" fill="none" stroke="#fff" stroke-width="1.7"/></svg>
<svg style="left:1338px;top:1026.7px" width="8" height="4.2" viewBox="0 0 8 4.2"><path d="M0 4.2 L4 0 L8 4.2 Z" fill="#fff"/></svg>
<svg style="left:1366.5px;top:1020.5px" width="14" height="15" viewBox="0 0 14 15"><path d="M7 0.6 C9.6 0.6 11 2.6 11 5 V7.6 L13.4 9.6 V10.6 H0.6 V9.6 L3 7.6 V5 C3 2.6 4.4 0.6 7 0.6 Z" fill="#d8d8d8"/><path d="M4.6 11.6 H9.4 C9.4 14.6 4.6 14.6 4.6 11.6 Z" fill="#d8d8d8"/></svg>
<svg style="left:1403px;top:1028px" width="10" height="8" viewBox="0 0 10 8"><rect x="8" y="0" width="1" height="1" fill="#b5aab0"/><rect x="6" y="2" width="1" height="1" fill="#b5aab0"/><rect x="8" y="2" width="1" height="1" fill="#b5aab0"/><rect x="4" y="4" width="1" height="1" fill="#b5aab0"/><rect x="6" y="4" width="1" height="1" fill="#b5aab0"/><rect x="8" y="4" width="1" height="1" fill="#b5aab0"/><rect x="2" y="6" width="1" height="1" fill="#b5aab0"/><rect x="4" y="6" width="1" height="1" fill="#b5aab0"/><rect x="6" y="6" width="1" height="1" fill="#b5aab0"/><rect x="8" y="6" width="1" height="1" fill="#b5aab0"/></svg>
<!-- text -->
<span class="t" style="left:44px;top:8px;font-size:12.1px;color:#1e1e1e;letter-spacing:-0.225px;"><u>F</u>ile</span>
<span class="t" style="left:81.7px;top:8px;font-size:12.1px;color:#1e1e1e;letter-spacing:-0.215px;"><u>E</u>dit</span>
<span class="t" style="left:121.7px;top:8px;font-size:12.1px;color:#1e1e1e;letter-spacing:-0.229px;"><u>V</u>iew</span>
<span class="t" style="left:166.8px;top:8px;font-size:12.1px;color:#1e1e1e;letter-spacing:-0.151px;"><u>P</u>roject</span>
<span class="t" style="left:224px;top:8px;font-size:12.1px;color:#1e1e1e;letter-spacing:-0.081px;"><u>B</u>uild</span>
<span class="t" style="left:271px;top:8px;font-size:12.1px;color:#1e1e1e;letter-spacing:-0.208px;"><u>D</u>ebug</span>
<span class="t" style="left:326px;top:8px;font-size:12.1px;color:#1e1e1e;letter-spacing:-0.450px;transform:scaleX(0.9655);transform-origin:0 50%;">Te<u>s</u>t</span>
<span class="t" style="left:366px;top:8px;font-size:12.1px;color:#1e1e1e;letter-spacing:-0.321px;">A<u>n</u>alyze</span>
<span class="t" style="left:427.4px;top:8px;font-size:12.1px;color:#1e1e1e;letter-spacing:-0.327px;"><u>T</u>ools</span>
<span class="t" style="left:474px;top:8px;font-size:12.1px;color:#1e1e1e;letter-spacing:-0.357px;">E<u>x</u>tensions</span>
<span class="t" style="left:549.6px;top:8px;font-size:12.1px;color:#1e1e1e;letter-spacing:0.178px;"><u>W</u>indow</span>
<span class="t" style="left:613.7px;top:8px;font-size:12.1px;color:#1e1e1e;letter-spacing:0.056px;"><u>H</u>elp</span>
<span class="t" style="left:664px;top:8px;font-size:12.1px;color:#6a6a6a;-webkit-text-stroke:0;letter-spacing:-0.228px;">Search (Ctrl+Q)</span>
<span class="t" style="left:905px;top:8px;font-size:12.1px;color:#3b4a87;letter-spacing:0.144px;">WebApplication4</span>
<span class="t" style="left:1197.5px;top:8.5px;font-size:12.1px;color:#1e1e1e;letter-spacing:-0.155px;">Sign in</span>
<span class="t" style="left:1304.8px;top:39.5px;font-size:12.1px;color:#1e1e1e;letter-spacing:-0.450px;transform:scaleX(0.9863);transform-origin:0 50%;">Live Share</span>
<span class="t" style="left:279.5px;top:38px;font-size:12.1px;color:#1e1e1e;letter-spacing:-0.348px;">Debug</span>
<span class="t" style="left:350.3px;top:38px;font-size:12.1px;color:#1e1e1e;letter-spacing:-0.433px;">Any CPU</span>
<span class="t" style="left:482.9px;top:38px;font-size:12.1px;color:#1e1e1e;letter-spacing:-0.371px;">IIS Express (Google Chrome)</span>
<span class="t" style="left:259px;top:64px;font-size:12.1px;color:#1e1e1e;letter-spacing:0.040px;">Application Insights</span>
<span class="t" style="left:11.4px;top:99.5px;font-size:12.1px;color:#1e1e1e;letter-spacing:-0.058px;">Index.cshtml</span>
<span class="t" style="left:9.7px;top:993.7px;font-size:11.5px;color:#1e1e1e;letter-spacing:-0.450px;transform:scaleX(0.9717);transform-origin:0 50%;">100 %</span>
<span class="t" style="left:107.6px;top:993.7px;font-size:11.5px;color:#1e1e1e;letter-spacing:0.035px;">No issues found</span>
<span class="t" style="left:898.9px;top:993.7px;font-size:11.5px;color:#1e1e1e;letter-spacing:-0.314px;">Ln: 27</span>
<span class="t" style="left:947.5px;top:993.7px;font-size:11.5px;color:#1e1e1e;letter-spacing:-0.450px;transform:scaleX(0.9901);transform-origin:0 50%;">Ch: 1</span>
<span class="t" style="left:992px;top:993.7px;font-size:11.5px;color:#1e1e1e;letter-spacing:-0.450px;transform:scaleX(0.8518);transform-origin:0 50%;">SPC</span>
<span class="t" style="left:1031px;top:993.7px;font-size:11.5px;color:#1e1e1e;letter-spacing:-0.450px;transform:scaleX(0.8749);transform-origin:0 50%;">CRLF</span>
<span class="t" style="left:1077.8px;top:100.7px;font-size:12.1px;color:#ffffff;-webkit-text-stroke:0;letter-spacing:-0.101px;">Solution Explorer</span>
<span class="t" style="left:1079.3px;top:149.5px;font-size:12.1px;color:#6a6a6a;-webkit-text-stroke:0;letter-spacing:-0.144px;">Search Solution Explorer (Ctrl+ж)</span>
<span class="t" style="left:1109.2px;top:171.5px;font-size:12.1px;color:#1e1e1e;letter-spacing:-0.006px;">Solution &#x27;WebApplication4&#x27; (1 of 1 project)</span>
<span class="t" style="left:1127.2px;top:189.5px;font-size:12.1px;color:#1e1e1e;font-weight:bold;letter-spacing:-0.193px;">WebApplication4</span>
<span class="t" style="left:1145.2px;top:207.5px;font-size:12.1px;color:#1e1e1e;letter-spacing:-0.302px;">Connected Services</span>
<span class="t" style="left:1145.2px;top:225.5px;font-size:12.1px;color:#1e1e1e;letter-spacing:-0.253px;">Properties</span>
<span class="t" style="left:1145.2px;top:243.5px;font-size:12.1px;color:#1e1e1e;letter-spacing:-0.450px;transform:scaleX(0.9885);transform-origin:0 50%;">References</span>
<span class="t" style="left:1145.2px;top:261.5px;font-size:12.1px;color:#1e1e1e;letter-spacing:-0.412px;">App_Data</span>
<span class="t" style="left:1145.2px;top:279.5px;font-size:12.1px;color:#1e1e1e;letter-spacing:-0.333px;">App_Start</span>
<span class="t" style="left:1145.2px;top:297.5px;font-size:12.1px;color:#1e1e1e;letter-spacing:0.034px;">Content</span>
<span class="t" style="left:1145.2px;top:315.5px;font-size:12.1px;color:#1e1e1e;letter-spacing:-0.062px;">Controllers</span>
<span class="t" style="left:1145.2px;top:333.5px;font-size:12.1px;color:#1e1e1e;letter-spacing:-0.450px;transform:scaleX(0.9854);transform-origin:0 50%;">Data</span>
<span class="t" style="left:1145.2px;top:351.5px;font-size:12.1px;color:#1e1e1e;letter-spacing:-0.033px;">Models</span>
<span class="t" style="left:1145.2px;top:369.5px;font-size:12.1px;color:#1e1e1e;letter-spacing:-0.338px;">Scripts</span>
<span class="t" style="left:1145.2px;top:387.5px;font-size:12.1px;color:#1e1e1e;letter-spacing:-0.230px;">UploadedImageFiles</span>
<span class="t" style="left:1145.2px;top:405.5px;font-size:12.1px;color:#1e1e1e;letter-spacing:-0.450px;transform:scaleX(0.9934);transform-origin:0 50%;">Views</span>
<span class="t" style="left:1163.2px;top:423.5px;font-size:12.1px;color:#1e1e1e;letter-spacing:-0.118px;">Default</span>
<span class="t" style="left:1181.2px;top:441.5px;font-size:12.1px;color:#1e1e1e;letter-spacing:-0.008px;">Index.cshtml</span>
<span class="t" style="left:1163.2px;top:459.5px;font-size:12.1px;color:#1e1e1e;letter-spacing:0.057px;">web.config</span>
<span class="t" style="left:1145.2px;top:477.5px;font-size:12.1px;color:#1e1e1e;letter-spacing:-0.450px;transform:scaleX(0.9979);transform-origin:0 50%;">Global.asax</span>
<span class="t" style="left:1145.2px;top:495.5px;font-size:12.1px;color:#1e1e1e;letter-spacing:-0.147px;">packages.config</span>
<span class="t" style="left:1145.2px;top:513.5px;font-size:12.1px;color:#1e1e1e;letter-spacing:-0.008px;">Web.config</span>
<span class="t" style="left:28px;top:1020.5px;font-size:12.1px;color:#ffffff;-webkit-text-stroke:0;letter-spacing:-0.352px;">Item(s) Saved</span>
<span class="t" style="left:1214px;top:1020.5px;font-size:12.1px;color:#ffffff;-webkit-text-stroke:0;letter-spacing:-0.062px;">Add to Source Control</span>
</div>
</body>
</html>
